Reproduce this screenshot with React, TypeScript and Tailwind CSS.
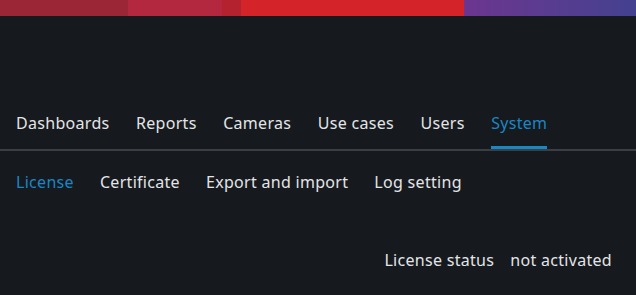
import React from "react";

const tabs = ["Dashboards", "Reports", "Cameras", "Use cases", "Users", "System"];
const subTabs = ["License", "Certificate", "Export and import", "Log setting"];

export default function App() {
  return (
    <div
      className="w-[636px] h-[295px] bg-[#16191d] text-[#e3e5e8] overflow-hidden tracking-[0.3px]"
      style={{ fontFamily: '"Noto Sans", "Open Sans", sans-serif' }}
    >
      <div className="flex h-[16px] w-full">
        <div className="w-[128px] bg-[#9a2636]" />
        <div className="w-[94px] bg-[#b3283f]" />
        <div className="w-[19px] bg-[#b42230]" />
        <div className="w-[223px] bg-[#d5232a]" />
        <div className="flex-1 bg-gradient-to-r from-[#6c358f] to-[#434190]" />
      </div>
      <div className="mt-[95px] flex gap-[26.5px] px-4 border-b-2 border-[#3a3f46]">
        {tabs.map((t) => (
          <div key={t} className="flex flex-col">
            <span className={`text-[16px] leading-6 ${t === "System" ? "text-[#1a87c5]" : ""}`}>{t}</span>
            <div className={`mt-[11px] h-[3px] ${t === "System" ? "bg-[#1a87c5]" : ""}`} />
          </div>
        ))}
      </div>
      <div className="mt-[19px] flex gap-[26px] px-4">
        {subTabs.map((t) => (
          <span key={t} className={`text-[16px] leading-6 ${t === "License" ? "text-[#1a87c5]" : ""}`}>{t}</span>
        ))}
      </div>
      <div className="mt-[54px] flex justify-end gap-[16px] pr-6 text-[16px] leading-6">
        <span>License status</span>
        <span>not activated</span>
      </div>
    </div>
  );
}
